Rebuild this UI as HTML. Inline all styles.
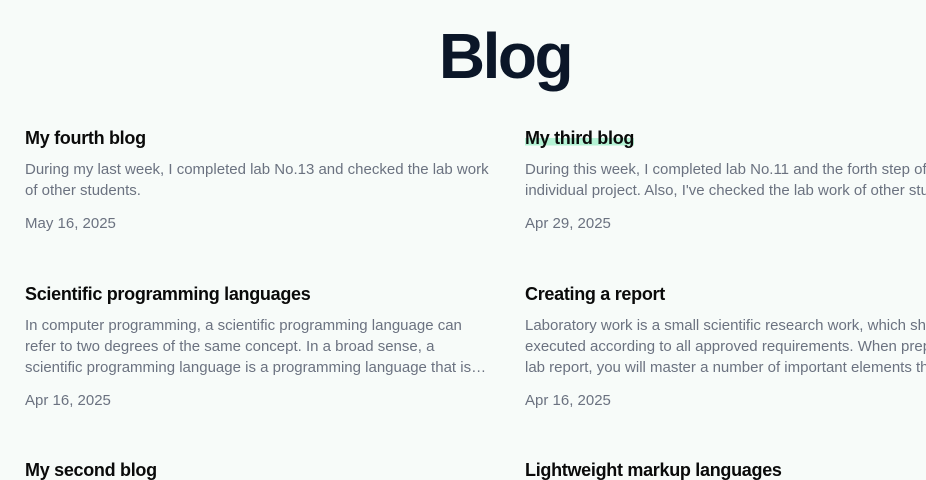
<!DOCTYPE html>
<html><head><meta charset="utf-8"><style>
html,body{margin:0;width:926px;height:480px;overflow:hidden}
body{background:#f7fbf9;font-family:"Liberation Sans",sans-serif;position:relative}
h1{position:absolute;left:0;width:926px;text-align:center;padding-left:84px;box-sizing:border-box;top:19px;margin:0;font-size:64px;line-height:74px;font-weight:bold;color:#0b1628;letter-spacing:-2.5px}
.c{position:absolute;width:470px;white-space:nowrap;overflow:hidden}
.r{width:401px}
.c h2{margin:0;font-size:18px;line-height:24px;font-weight:bold;color:#0a0a0a;letter-spacing:-0.3px}
.c h2 span{background:linear-gradient(to bottom,transparent 50%,#b4f2d4 50%,#b4f2d4 88%,transparent 88%)}
.c p{margin:9px 0 0;font-size:15px;line-height:21px;color:#6b7280}
.c .d{margin-top:12px;font-size:15px;line-height:21px;color:#6b7280}
</style></head><body>
<h1>Blog</h1>
<div class="c" style="left:25px;top:126px"><h2>My fourth blog</h2><p>During my last week, I completed lab No.13 and checked the lab work<br>of other students.</p><div class="d">May 16, 2025</div></div>
<div class="c r" style="left:525px;top:126px"><h2><span>My third blog</span></h2><p>During this week, I completed lab No.11 and the forth step of my<br>individual project. Also, I've checked the lab work of other students.</p><div class="d">Apr 29, 2025</div></div>
<div class="c" style="left:25px;top:282px"><h2>Scientific programming languages</h2><p>In computer programming, a scientific programming language can<br>refer to two degrees of the same concept. In a broad sense, a<br>scientific programming language is a programming language that is…</p><div class="d">Apr 16, 2025</div></div>
<div class="c r" style="left:525px;top:282px"><h2>Creating a report</h2><p>Laboratory work is a small scientific research work, which should be<br>executed according to all approved requirements. When preparing a<br>lab report, you will master a number of important elements that</p><div class="d">Apr 16, 2025</div></div>
<div class="c" style="left:25px;top:458px"><h2>My second blog</h2></div>
<div class="c r" style="left:525px;top:458px"><h2>Lightweight markup languages</h2></div>
</body></html>
